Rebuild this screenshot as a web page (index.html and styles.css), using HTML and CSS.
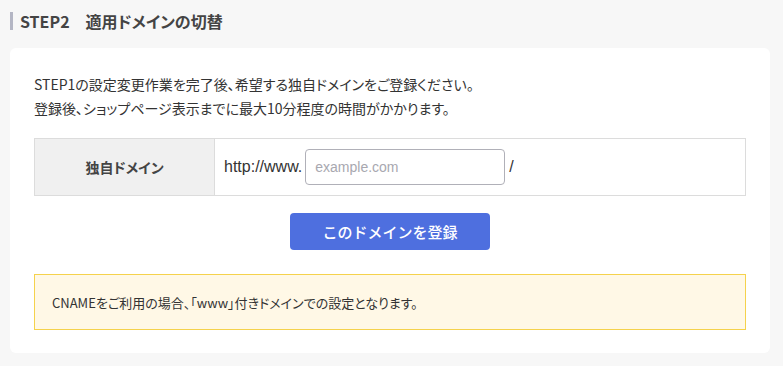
FILE: index.html
```html
<!DOCTYPE html>
<html lang="ja">
<head>
<meta charset="utf-8">
<link rel="stylesheet" href="styles.css">
</head>
<body>
<div class="page">
  <h2 class="heading">STEP2　適用ドメインの切替</h2>
  <div class="card">
    <p class="lead">STEP1の設定変更作業を完了後、希望する独自ドメインをご登録ください。<br>登録後、ショップページ表示までに最大10分程度の時間がかかります。</p>
    <div class="table">
      <div class="label">独自ドメイン</div>
      <div class="value">
        <span class="prefix">http://www.</span>
        <input class="input" type="text" placeholder="example.com">
        <span class="slash">/</span>
      </div>
    </div>
    <div class="actions">
      <button class="btn" type="button">このドメインを登録</button>
    </div>
    <div class="notice">CNAMEをご利用の場合、「www」付きドメインでの設定となります。</div>
  </div>
</div>
</body>
</html>
```
FILE: styles.css
```css
html, body {
  margin: 0;
  padding: 0;
  background: #f7f7f7;
}
body {
  font-family: "Noto Sans CJK JP", "Noto Sans", sans-serif;
  color: #333;
}
.page {
  padding: 12px 13px 0 10px;
}
.heading {
  margin: 0;
  border-left: 3px solid #b4b6c4;
  padding-left: 7px;
  font-size: 16px;
  font-weight: 700;
  line-height: 18px;
  color: #444;
  font-feature-settings: "palt";
}
.card {
  margin-top: 18px;
  background: #fff;
  border-radius: 6px;
  padding: 24px 24px 23px;
}
.lead {
  margin: 0;
  font-size: 14px;
  line-height: 24px;
  color: #333;
  font-feature-settings: "palt";
}
.table {
  margin-top: 18px;
  display: flex;
  border: 1px solid #dcdcdc;
  height: 56px;
}
.label {
  width: 179px;
  background: #f0f0f0;
  border-right: 1px solid #dcdcdc;
  display: flex;
  align-items: center;
  justify-content: center;
  font-size: 14px;
  font-weight: 700;
  color: #444;
  font-feature-settings: "palt";
}
.value {
  flex: 1;
  display: flex;
  align-items: center;
  padding-left: 9px;
  font-family: "Liberation Sans", Arial, sans-serif;
  font-size: 16px;
  color: #333;
}
.prefix {
  margin-right: 3px;
}
.input {
  box-sizing: border-box;
  width: 200px;
  height: 36px;
  border: 1px solid #b0b0b8;
  border-radius: 4px;
  padding: 0 9px;
  font-family: "Liberation Sans", Arial, sans-serif;
  font-size: 14px;
  color: #333;
  outline: none;
}
.input::placeholder {
  color: #a8a8b0;
}
.slash {
  margin-left: 4px;
}
.actions {
  margin-top: 17px;
  display: flex;
  justify-content: center;
}
.btn {
  width: 200px;
  height: 37px;
  border: none;
  border-radius: 4px;
  background: #4e6fdf;
  color: #fff;
  font-family: "Noto Sans CJK JP", "Noto Sans", sans-serif;
  font-size: 15px;
  font-weight: 500;
  cursor: pointer;
}
.notice {
  margin-top: 24px;
  box-sizing: border-box;
  height: 56px;
  display: flex;
  align-items: center;
  padding-left: 17px;
  background: #fff8e6;
  border: 1px solid #f5d24c;
  font-size: 13px;
  color: #333;
  font-feature-settings: "palt";
}
```
